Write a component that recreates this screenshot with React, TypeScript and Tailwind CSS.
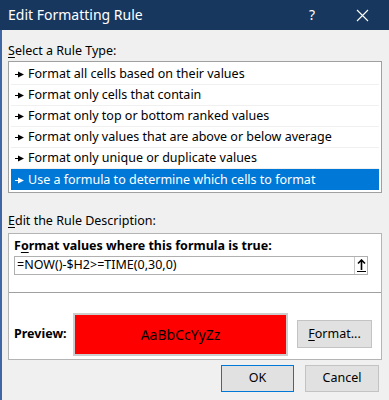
import React from 'react';

const ruleTypes = [
    'Format all cells based on their values',
    'Format only cells that contain',
    'Format only top or bottom ranked values',
    'Format only values that are above or below average',
    'Format only unique or duplicate values',
    'Use a formula to determine which cells to format',
];

// small pointer in front of each rule type
function Pointer({ selected }: { selected: boolean }) {
    return (
        <svg width="9" height="7" viewBox="0 0 9 7" className="shrink-0">
            <polygon points="0,3 3,3 3,0.5 9,3.5 3,6.5 3,4 0,4" fill={selected ? '#ffffff' : '#000000'} />
        </svg>
    );
}

export default function App() {
    const font = { fontFamily: '"Noto Sans", "Segoe UI", sans-serif' };

    return (
        <div className="w-[389px] h-[400px] bg-[#f0f0f0] text-black overflow-hidden flex flex-col" style={font}>
            {/* title bar */}
            <div className="h-[30px] bg-[#17375f] text-white flex items-center shrink-0">
                <span className="pl-[8px] text-[14px] leading-none">Edit Formatting Rule</span>
                <span className="ml-auto w-[20px] text-center text-[14px] leading-none">?</span>
                <span className="ml-[30px] mr-[17px] w-[20px] flex justify-center">
                    <svg width="13" height="13" viewBox="0 0 13 13">
                        <path d="M1 1 L12 12 M12 1 L1 12" stroke="#ffffff" strokeWidth="1.1" />
                    </svg>
                </span>
            </div>

            <div className="flex-1 border-l-[2px] border-[#3f67a5] pl-[6px] pr-[7px] flex flex-col">
                <div className="mt-[12px] h-[18px] text-[12.5px] leading-[18px]">
                    <span className="underline underline-offset-2">S</span>elect a Rule Type:
                </div>

                {/* rule list */}
                <div className="mt-[1px] bg-white border border-[#a0a0a0] p-[2px]">
                    {ruleTypes.map((rule, i) => {
                        const selected = i === ruleTypes.length - 1;
                        return (
                            <div
                                key={rule}
                                className={`h-[21px] flex items-center gap-[4px] pl-[4px] pt-[1px] text-[12.5px] ${
                                    selected ? 'bg-[#0078d7] text-white' : 'border-b border-[#f0f0f0]'
                                }`}
                            >
                                <Pointer selected={selected} />
                                <span>{rule}</span>
                            </div>
                        );
                    })}
                </div>

                <div className="mt-[19px] h-[18px] text-[12.5px] leading-[18px]">
                    <span className="underline underline-offset-2">E</span>dit the Rule Description:
                </div>

                {/* description box */}
                <div className="mt-[3px] bg-white border border-[#b4b4b4] flex flex-col">
                    <div className="px-[5px] pt-[3px] pb-[17px]">
                        <div className="h-[17px] text-[12.5px] font-bold leading-[17px]">
                            F<span className="underline underline-offset-2">o</span>rmat values where this formula is true:
                        </div>
                        <div className="mt-[2px] mr-[8px] h-[19px] border border-[#b0b0b0] flex items-center">
                            <span className="pl-[2px] text-[12.5px] leading-none">=NOW()-$H2&gt;=TIME(0,30,0)</span>
                            <div className="ml-auto h-full w-[13px] border-l border-[#c8c8c8] bg-white flex items-center justify-center">
                                <svg width="9" height="13" viewBox="0 0 9 13">
                                    <path d="M4.5 1 L4.5 11 M1 4.5 L4.5 1 L8 4.5" stroke="#000" strokeWidth="1.6" fill="none" />
                                    <path d="M0 12.5 L9 12.5" stroke="#000" strokeWidth="1" />
                                </svg>
                            </div>
                        </div>
                    </div>
                    <div className="h-px bg-[#a0a0a0]" />
                    <div className="h-[66px] flex items-center pl-[5px] pt-[19px] pb-[3px]">
                        <span className="w-[59px] text-[12.5px] font-bold">Preview:</span>
                        <div className="w-[215px] h-[43px] bg-[#ff0000] border-2 border-[#cdcdcd] flex items-center justify-center text-[14px]">
                            AaBbCcYyZz
                        </div>
                        <button className="ml-[9px] w-[75px] h-[28px] bg-[#e1e1e1] border border-[#c3c3c3] text-[12.5px]">
                            <span className="underline underline-offset-2">F</span>ormat...
                        </button>
                    </div>
                </div>

                {/* dialog buttons */}
                <div className="mt-[5px] flex justify-end gap-[11px] pr-[3px]">
                    <button className="w-[73px] h-[27px] bg-[#e1e1e1] border border-[#0078d7] text-[12.5px]">OK</button>
                    <button className="w-[74px] h-[27px] bg-[#e1e1e1] border border-[#c3c3c3] text-[12.5px]">Cancel</button>
                </div>
            </div>
        </div>
    );
}
